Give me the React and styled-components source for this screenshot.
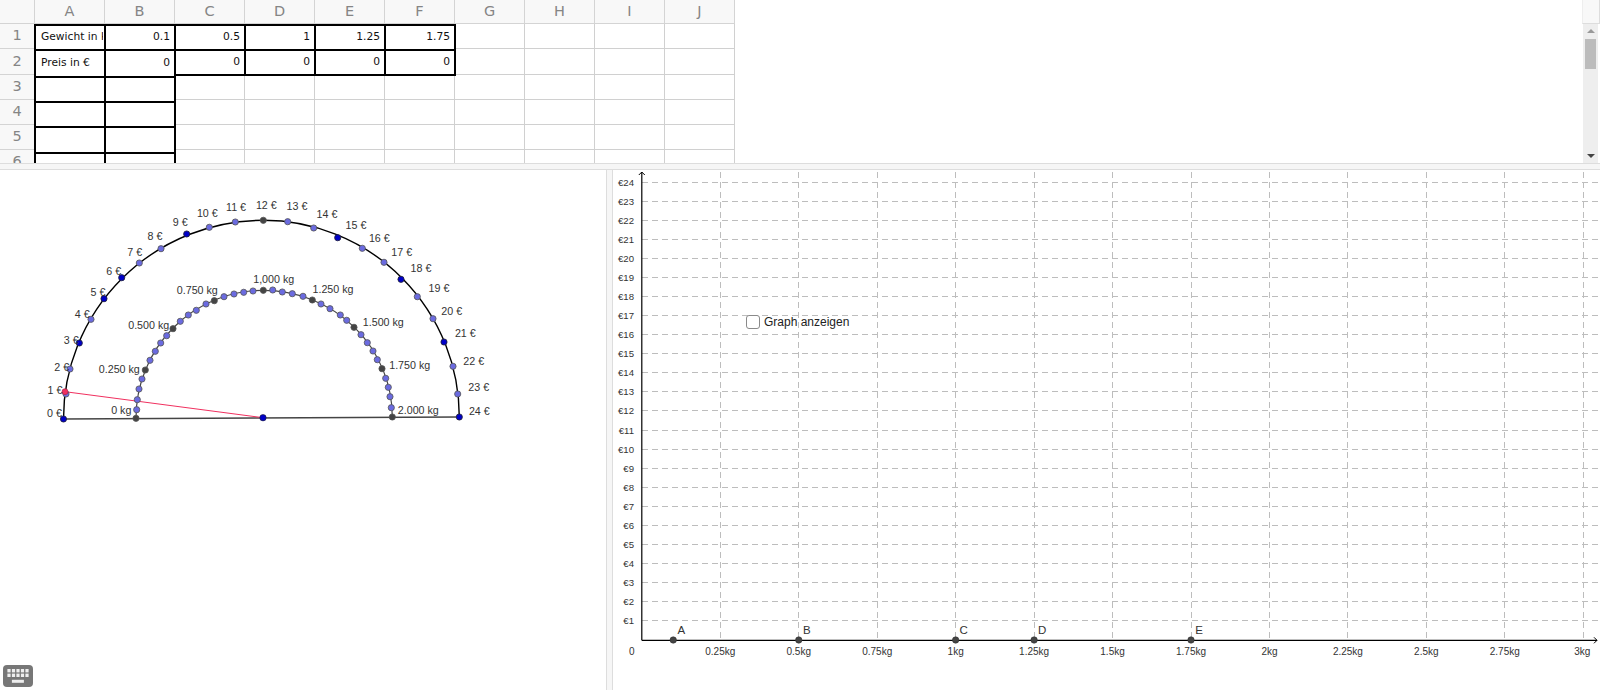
import React from "react";
import styled, { createGlobalStyle } from "styled-components";

const GlobalStyle = createGlobalStyle`
  html, body {
    margin: 0;
    padding: 0;
    background: #fff;
    font-family: "Liberation Sans", Arial, sans-serif;
  }
`;

const Page = styled.div`
  width: 1600px;
  height: 690px;
  display: flex;
  flex-direction: column;
  overflow: hidden;
`;

const SheetPane = styled.div`
  height: 163px;
  display: flex;
  justify-content: space-between;
  overflow: hidden;
`;

const Sheet = styled.div`
  display: grid;
  grid-template-columns: 35px repeat(10, 70px);
  grid-template-rows: 25px 25px 27px 25px 25px 26px 22px;
  align-self: flex-start;
  font-family: "DejaVu Sans", sans-serif;
`;

const HeaderCell = styled.div`
  background: #f8f8f8;
  border-right: 1px solid #d4d4d4;
  border-bottom: 1px solid #d4d4d4;
  color: #858585;
  font-size: 14.5px;
  display: flex;
  align-items: center;
  justify-content: center;
  box-sizing: border-box;
  padding-bottom: 2px;
  margin-top: ${(p) => -(p.$lift?.[0] || 0)}px;
  margin-bottom: ${(p) => p.$lift?.[1] || 0}px;
`;

const Cell = styled.div`
  position: relative;
  box-sizing: border-box;
  min-width: 0;
  border-right: 1px solid #d0d0d0;
  border-bottom: 1px solid #d0d0d0;
  font-size: 10.7px;
  color: #111;
  display: flex;
  align-items: center;
  padding: 0 ${(p) => (p.$number ? 4 : 1)}px 2px 6px;
  white-space: nowrap;
  justify-content: ${(p) => (p.$number ? "flex-end" : "flex-start")};
  margin-top: ${(p) => -(p.$lift?.[0] || 0)}px;
  margin-bottom: ${(p) => p.$lift?.[1] || 0}px;
  ${(p) =>
    p.$boxed &&
    `
    z-index: 1;
    &::after {
      content: "";
      position: absolute;
      inset: -1px -2px -2px -1px;
      border: 2px solid #000;
    }
  `}
`;

const CellText = styled.span`
  overflow: hidden;
`;

const ScrollColumn = styled.div`
  width: 18px;
  display: flex;
  flex-direction: column;
`;

const ScrollCorner = styled.div`
  height: 23px;
  background: #f8f8f8;
  border-left: 1px solid #eee;
  border-right: 1px solid #ddd;
  border-bottom: 1px solid #ddd;
`;

const ScrollTrack = styled.div`
  flex: 1;
  background: #eee;
  margin-right: 2px;
  margin-left: 1px;
  display: flex;
  flex-direction: column;
  align-items: center;
  padding: 5px 0 5px;
`;

const ScrollArrow = styled.div`
  width: 0;
  height: 0;
  border-left: 4px solid transparent;
  border-right: 4px solid transparent;
  ${(p) =>
    p.$down
      ? "border-top: 4px solid #444; margin-top: auto;"
      : "border-bottom: 4px solid #999;"}
`;

const ScrollThumb = styled.div`
  width: 11px;
  height: 30px;
  margin-top: 6px;
  background: #bcbcbc;
`;

const HorizontalDivider = styled.div`
  height: 7px;
  box-sizing: border-box;
  background: #f6f6f6;
  border-top: 1px solid #ddd;
  border-bottom: 1px solid #ddd;
`;

const Views = styled.div`
  flex: 1;
  display: flex;
  min-height: 0;
`;

const AlgebraView = styled.div`
  position: relative;
  width: 606px;
`;

const VerticalDivider = styled.div`
  width: 7px;
  box-sizing: border-box;
  background: #f6f6f6;
  border-left: 1px solid #ddd;
  border-right: 1px solid #ddd;
`;

const GraphView = styled.div`
  position: relative;
  flex: 1;
`;

const Drawing = styled.svg`
  display: block;
  width: 100%;
  height: 100%;
`;

const KeyboardButton = styled.button`
  position: absolute;
  left: 3px;
  bottom: 3px;
  width: 30px;
  height: 22px;
  padding: 0;
  border: 0;
  border-radius: 4px;
  background: #777;
  display: flex;
  align-items: center;
  justify-content: center;
`;

const GraphToggle = styled.label`
  position: absolute;
  left: 133px;
  top: 145px;
  display: flex;
  align-items: center;
  gap: 4px;
  font-size: 12px;
  color: #222;
`;

const ToggleBox = styled.span`
  width: 14px;
  height: 14px;
  box-sizing: border-box;
  border: 1.5px solid #8a8a8a;
  border-radius: 3px;
  background: #fff;
`;

const columns = ["A", "B", "C", "D", "E", "F", "G", "H", "I", "J"];
const rows = [1, 2, 3, 4, 5, 6];
const weights = ["0.1", "0.5", "1", "1.25", "1.75"];

// the thin grid sits a little higher than the bordered A/B cells: [up, short by]
const rowLift = { 1: [1, 1], 2: [1, 2], 3: [2, 2], 4: [2, 2], 5: [2, 3], 6: [3, 0] };

function cellFor(row, col) {
  if (row === 1 && col === 0) return { text: "Gewicht in kg", boxed: true };
  if (row === 2 && col === 0) return { text: "Preis in €", boxed: true };
  if (row === 1 && col <= 5) return { text: weights[col - 1], number: true, boxed: true };
  if (row === 2 && col === 1) return { text: "0", number: true, boxed: true };
  if (row === 2 && col <= 5) return { text: "0", number: true, boxed: true, lift: [0, 2] };
  if (col <= 1) return { boxed: true };
  return { lift: rowLift[row] };
}

const euroPoints = [
  [63.5, 419, "blue"], [66, 394, "lav"], [70, 369, "lav"], [79.3, 343, "blue"],
  [91, 319.3, "lav"], [104, 298.7, "blue"], [121.7, 277.7, "blue"], [139.3, 263, "lav"],
  [161, 248.7, "lav"], [186.7, 234, "blue"], [209.3, 227.3, "lav"], [235.3, 222, "lav"],
  [263.3, 220.3, "dark"], [287.7, 221.7, "lav"], [313.7, 228, "lav"], [337.7, 237.7, "blue"],
  [362.3, 248.3, "lav"], [384, 262.3, "lav"], [401, 279.3, "blue"], [417.3, 296.7, "lav"],
  [433, 318.7, "lav"], [444, 342, "blue"], [453, 366.3, "lav"], [457.7, 394, "lav"],
  [459.3, 417, "blue"],
];

const kgPoints = [
  [136, 418.3, "dark"], [136.7, 409.7, "lav"], [137.3, 399.7, "lav"], [139, 389, "lav"],
  [142, 379, "lav"], [145.3, 370, "dark"], [150, 360.3, "lav"], [155.3, 351.3, "lav"],
  [160.7, 343, "lav"], [166.7, 335.7, "lav"], [173, 328.7, "dark"], [180.3, 321.3, "lav"],
  [188.3, 315, "lav"], [196.3, 310.3, "lav"], [206, 304, "lav"], [214.3, 300.7, "dark"],
  [224, 296.7, "lav"], [234, 294, "lav"], [243.7, 292.3, "lav"], [253, 291, "lav"],
  [263.3, 290.3, "dark"], [272.7, 290, "lav"], [282.3, 292, "lav"], [292.3, 293.7, "lav"],
  [303, 296.3, "lav"], [312.3, 300, "dark"], [321, 304, "lav"], [330, 308.7, "lav"],
  [340.3, 315, "lav"], [346.7, 320.3, "lav"], [354, 327.3, "dark"], [361, 334.7, "lav"],
  [367.3, 342.7, "lav"], [373, 351, "lav"], [377.3, 359.7, "lav"], [382, 368.7, "dark"],
  [385.7, 378.3, "lav"], [388.3, 387.3, "lav"], [390, 396.7, "lav"], [391.3, 407.7, "lav"],
  [392.3, 417, "dark"],
];

const euroLabels = [
  [54.5, 413], [55, 390], [61.7, 366.7], [71.3, 339.7], [82.3, 314.3], [98, 291.7],
  [113.7, 270.7], [134.7, 252.3], [155, 236.3], [180.3, 221.7], [207.3, 212.7], [236, 206.7],
  [266.3, 205], [297, 206.3], [327, 214.3], [356, 224.7], [379.3, 237.7], [401.7, 252.3],
  [421, 268], [439, 288.3], [451.7, 310.7], [465.3, 333.3], [473.7, 361], [478.7, 387],
  [479.3, 411.3],
];

const kgLabels = [
  ["0 kg", 121.3, 410], ["0.250 kg", 119.3, 369], ["0.500 kg", 148.7, 324.7],
  ["0.750 kg", 197.3, 290], ["1,000 kg", 273.7, 279], ["1.250 kg", 333, 289],
  ["1.500 kg", 383.3, 322.3], ["1.750 kg", 409.7, 365], ["2.000 kg", 418.3, 410],
];

const pointFill = { lav: "#6b6be0", blue: "#0000c8", dark: "#444" };

const Dot = ({ x, y, kind }) => (
  <circle cx={x} cy={y} r="3.1" fill={pointFill[kind]} stroke={kind === "blue" ? "#223" : "#555"} strokeWidth="0.8" />
);

const ScaleLabel = styled.text`
  font-family: "Liberation Sans", Arial, sans-serif;
  font-size: ${(p) => p.$size || 10}px;
  fill: #333;
  text-anchor: ${(p) => p.$anchor || "middle"};
  dominant-baseline: central;
`;

function ScaleDrawing() {
  return (
    <Drawing viewBox="0 170 606 520">
      <path d="M63.5 419 A199.8 198.7 0 0 1 263.3 220.3 A196 196.7 0 0 1 459.3 417" fill="none" stroke="#000" strokeWidth="1.4" />
      <path d="M136 418.3 A127.3 128 0 0 1 263.3 290.3 A129 126.7 0 0 1 392.3 417" fill="none" stroke="#444" strokeWidth="1.2" />
      <line x1="63.5" y1="419" x2="459.3" y2="417" stroke="#444" strokeWidth="1.4" />
      <line x1="65" y1="391.7" x2="263" y2="417.7" stroke="#f0305f" strokeWidth="1" />
      {euroPoints.map(([x, y, kind], i) => (
        <Dot key={i} x={x} y={y} kind={kind} />
      ))}
      {kgPoints.map(([x, y, kind], i) => (
        <Dot key={i} x={x} y={y} kind={kind} />
      ))}
      <circle cx="65" cy="391.7" r="3" fill="#f0305f" stroke="#a02040" strokeWidth="0.6" />
      <circle cx="263" cy="417.7" r="3.2" fill="#0000c8" stroke="#223" strokeWidth="0.6" />
      {euroLabels.map(([x, y], i) => (
        <ScaleLabel key={i} x={x} y={y} $size={10.7}>
          {i} €
        </ScaleLabel>
      ))}
      {kgLabels.map(([text, x, y]) => (
        <ScaleLabel key={text} x={x} y={y} $size={10.7}>
          {text}
        </ScaleLabel>
      ))}
    </Drawing>
  );
}

const xAt = (kg) => 641.85 + kg * 313.8;
const yAt = (euro) => 620.3 - (euro - 1) * 19.03;
const AXIS_Y = 640.3;

const priceSteps = Array.from({ length: 24 }, (_, i) => i + 1);
const weightSteps = [
  [0.25, "0.25kg"], [0.5, "0.5kg"], [0.75, "0.75kg"], [1, "1kg"], [1.25, "1.25kg"], [1.5, "1.5kg"],
  [1.75, "1.75kg"], [2, "2kg"], [2.25, "2.25kg"], [2.5, "2.5kg"], [2.75, "2.75kg"], [3, "3kg"],
];
const marks = [
  ["A", 0.1], ["B", 0.5], ["C", 1], ["D", 1.25], ["E", 1.75],
];

function GraphDrawing() {
  return (
    <Drawing viewBox="613 170 987 520">
      <g shapeRendering="crispEdges" stroke="#bdbdbd" strokeWidth="1" strokeDasharray="6 4">
        {priceSteps.map((n) => (
          <line key={n} x1="642" x2="1600" y1={yAt(n)} y2={yAt(n)} />
        ))}
        {weightSteps.map(([kg]) => (
          <line key={kg} x1={xAt(kg)} x2={xAt(kg)} y1="172" y2={AXIS_Y} />
        ))}
      </g>
      <line x1="641.8" x2="641.8" y1="172" y2={AXIS_Y} stroke="#000" strokeWidth="1.2" />
      <line x1="641.8" x2="1597" y1={AXIS_Y} y2={AXIS_Y} stroke="#000" strokeWidth="1.2" />
      <path d="M638.8 175 L641.8 172 L644.8 175" fill="none" stroke="#000" strokeWidth="1" />
      <path d="M1594 637.3 L1597 640.3 L1594 643.3" fill="none" stroke="#000" strokeWidth="1" />
      {priceSteps.map((n) => (
        <ScaleLabel key={n} x="634" y={yAt(n)} $anchor="end" $size={9.6}>
          €{n}
        </ScaleLabel>
      ))}
      <ScaleLabel x="631.7" y="651">0</ScaleLabel>
      {weightSteps.map(([kg, label]) => (
        <ScaleLabel key={kg} x={kg === 3 ? xAt(kg) - 1 : xAt(kg)} y="651">
          {label}
        </ScaleLabel>
      ))}
      {marks.map(([name, kg]) => (
        <g key={name}>
          <circle cx={xAt(kg)} cy={AXIS_Y - 0.3} r="3.2" fill="#444" stroke="#333" strokeWidth="0.6" />
          <ScaleLabel x={xAt(kg) + 8} y="630" $size={11.5}>
            {name}
          </ScaleLabel>
        </g>
      ))}
    </Drawing>
  );
}

function KeyboardIcon() {
  const keys = [];
  for (let r = 0; r < 2; r++) {
    for (let c = 0; c < 5; c++) {
      keys.push(<rect key={`${r}-${c}`} x={c * 4.5} y={r * 4.6} width="3.2" height="3.4" fill="#eee" />);
    }
  }
  return (
    <svg width="22" height="15" viewBox="0 0 21.2 15">
      {keys}
      <rect x="4.5" y="10.8" width="12" height="3" fill="#eee" />
    </svg>
  );
}

export default function App() {
  return (
    <Page>
      <GlobalStyle />
      <SheetPane>
        <Sheet>
          <HeaderCell $lift={[0, 1]} />
          {columns.map((c) => (
            <HeaderCell key={c} $lift={[0, 1]}>{c}</HeaderCell>
          ))}
          {rows.map((row) => (
            <React.Fragment key={row}>
              <HeaderCell $lift={rowLift[row]}>{row}</HeaderCell>
              {columns.map((c, col) => {
                const cell = cellFor(row, col);
                return (
                  <Cell key={c} $number={cell.number} $boxed={cell.boxed} $lift={cell.lift}>
                    <CellText>{cell.text}</CellText>
                  </Cell>
                );
              })}
            </React.Fragment>
          ))}
        </Sheet>
        <ScrollColumn>
          <ScrollCorner />
          <ScrollTrack>
            <ScrollArrow />
            <ScrollThumb />
            <ScrollArrow $down />
          </ScrollTrack>
        </ScrollColumn>
      </SheetPane>
      <HorizontalDivider />
      <Views>
        <AlgebraView>
          <ScaleDrawing />
          <KeyboardButton aria-label="Bildschirmtastatur">
            <KeyboardIcon />
          </KeyboardButton>
        </AlgebraView>
        <VerticalDivider />
        <GraphView>
          <GraphDrawing />
          <GraphToggle>
            <ToggleBox />
            Graph anzeigen
          </GraphToggle>
        </GraphView>
      </Views>
    </Page>
  );
}
